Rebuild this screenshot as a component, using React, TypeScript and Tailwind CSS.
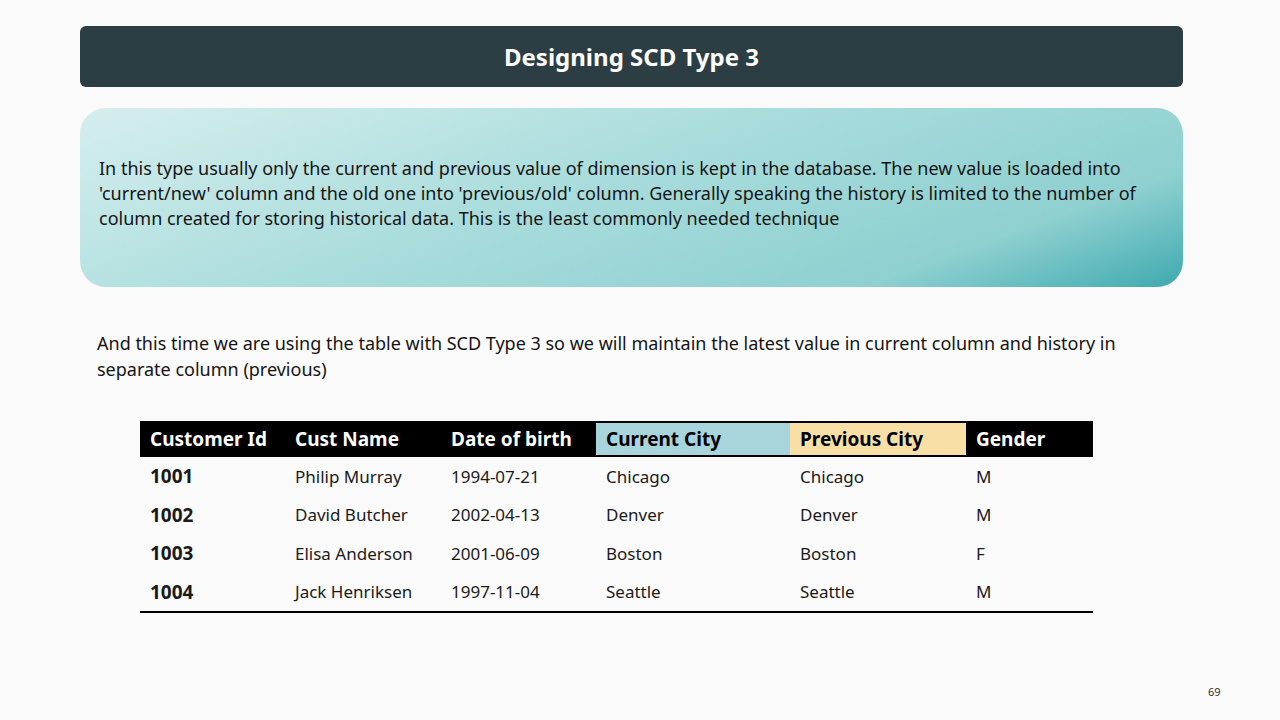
export default function App() {
  const rows = [
    ["1001", "Philip Murray", "1994-07-21", "Chicago", "Chicago", "M"],
    ["1002", "David Butcher", "2002-04-13", "Denver", "Denver", "M"],
    ["1003", "Elisa Anderson", "2001-06-09", "Boston", "Boston", "F"],
    ["1004", "Jack Henriksen", "1997-11-04", "Seattle", "Seattle", "M"],
  ];
  const widths = ["w-[147px]", "w-[156px]", "w-[153px]", "w-[194px]", "w-[176px]", "w-[127px]"];
  const pads = ["pl-[10px]", "pl-[8px]", "pl-[8px]", "pl-[10px]", "pl-[10px]", "pl-[10px]"];
  const heads = ["Customer Id", "Cust Name", "Date of birth", "Current City", "Previous City", "Gender"];
  const headBg = ["", "", "", "bg-[#a8d5dc] text-black my-[2px]", "bg-[#f7dfa5] text-black my-[2px]", ""];
  return (
    <div className="w-[1280px] h-[720px] bg-[#fafafa] relative overflow-hidden [font-family:'Liberation_Sans',Arial,sans-serif] text-[#1a1a1a]">
      <div className="pt-[26px] px-[80px] w-[1263px]">
        <div className="h-[61px] rounded-md bg-[#2c3e44] flex items-center justify-center text-white text-[24px] font-bold">
          Designing SCD Type 3
        </div>
        <div className="mt-[21px] h-[179px] rounded-[26px] bg-[linear-gradient(160deg,#d6eeee_0%,#a9dcdc_45%,#8fd0d0_80%,#3faab0_100%)] flex items-center px-[19px] pb-[8px] text-[18px] leading-[25px] text-[#151515]">
          In this type usually only the current and previous value of dimension is kept in the database. The new value is loaded into 'current/new' column and the old one into 'previous/old' column. Generally speaking the history is limited to the number of column created for storing historical data. This is the least commonly needed technique
        </div>
        <p className="mt-[43px] ml-[17px] text-[18px] leading-[26px] text-[#151515]">
          And this time we are using the table with SCD Type 3 so we will maintain the latest value in current column and history in separate column (previous)
        </p>
        <div className="mt-[39px] ml-[60px] w-[953px] border-b-2 border-black">
          <div className="flex h-[36px] bg-black text-white text-[19px] font-bold">
            {heads.map((h, i) => (
              <div key={h} className={`${widths[i]} ${headBg[i]} ${pads[i]} flex items-center`}>
                {h}
              </div>
            ))}
          </div>
          {rows.map((r) => (
            <div key={r[0]} className="flex h-[38.5px] items-center text-[17px]">
              {r.map((c, i) => (
                <div key={i} className={`${widths[i]} ${pads[i]} ${i === 0 ? "font-bold text-[19px]" : ""}`}>
                  {c}
                </div>
              ))}
            </div>
          ))}
        </div>
      </div>
      <div className="absolute left-[1208px] top-[684px] text-[11px] text-[#333]">69</div>
    </div>
  );
}
